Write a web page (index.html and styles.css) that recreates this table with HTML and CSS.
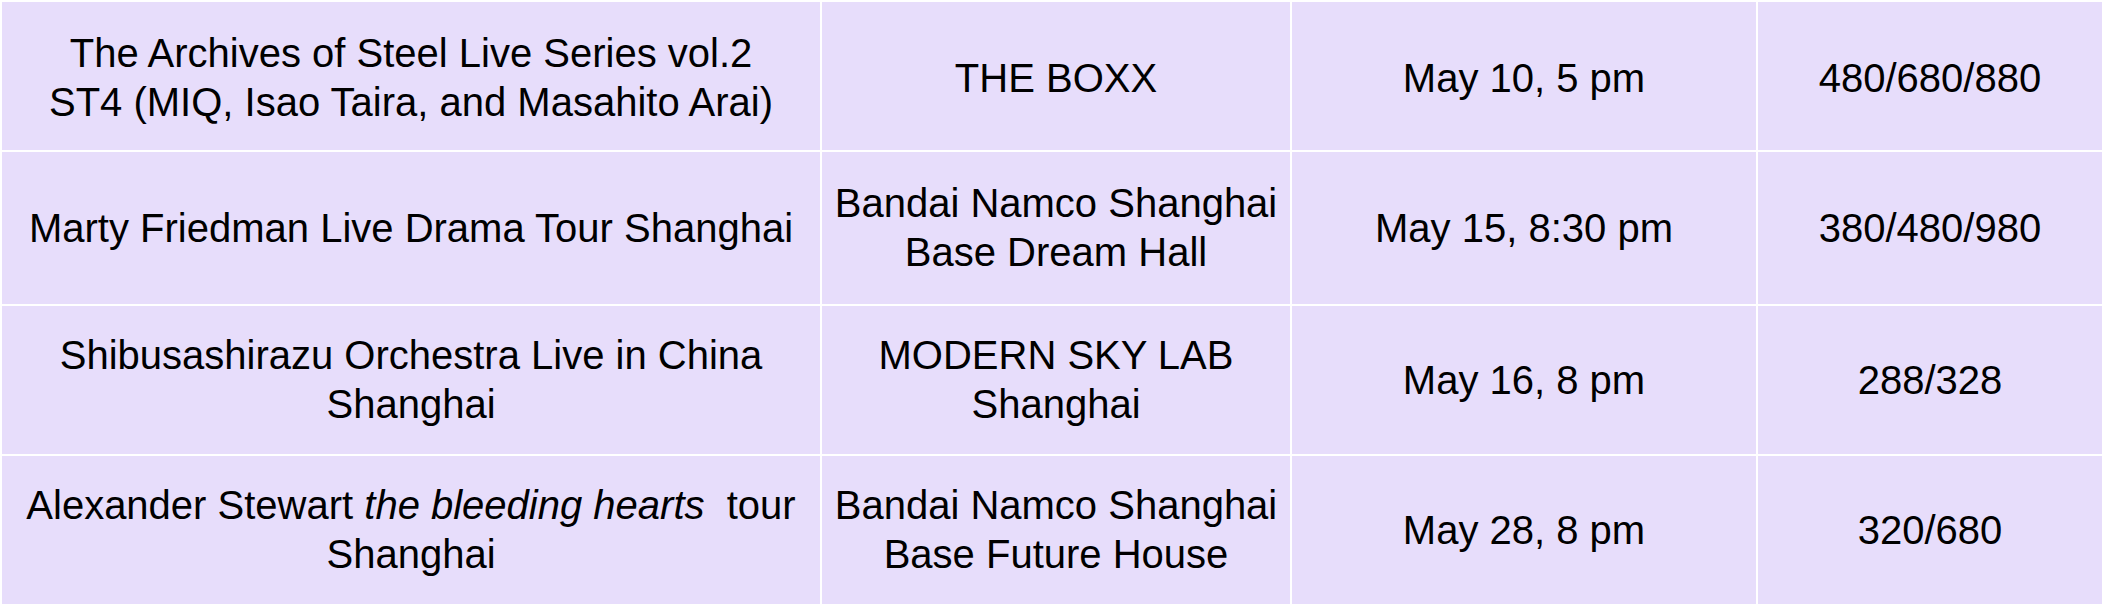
FILE: index.html
```html
<!DOCTYPE html>
<html lang="en">
<head>
<meta charset="utf-8">
<title>Concert schedule</title>
<link rel="stylesheet" href="styles.css">
</head>
<body>
<table class="schedule">
  <colgroup>
    <col class="col-title">
    <col class="col-venue">
    <col class="col-date">
    <col class="col-price">
  </colgroup>
  <tbody>
    <tr class="row-first">
      <td>The Archives of Steel Live Series vol.2<br>ST4 (MIQ, Isao Taira, and Masahito Arai)</td>
      <td>THE BOXX</td>
      <td>May 10, 5 pm</td>
      <td>480/680/880</td>
    </tr>
    <tr class="row-b">
      <td>Marty Friedman Live Drama Tour Shanghai</td>
      <td>Bandai Namco Shanghai<br>Base Dream Hall</td>
      <td>May 15, 8:30 pm</td>
      <td>380/480/980</td>
    </tr>
    <tr class="row-a">
      <td>Shibusashirazu Orchestra Live in China<br>Shanghai</td>
      <td>MODERN SKY LAB<br>Shanghai</td>
      <td>May 16, 8 pm</td>
      <td>288/328</td>
    </tr>
    <tr class="row-a">
      <td>Alexander Stewart <em>the bleeding hearts</em>&nbsp; tour<br>Shanghai</td>
      <td>Bandai Namco Shanghai<br>Base Future House</td>
      <td>May 28, 8 pm</td>
      <td>320/680</td>
    </tr>
  </tbody>
</table>
</body>
</html>
```
FILE: styles.css
```css
html, body {
  margin: 0;
  padding: 0;
  background: #ffffff;
}

.schedule {
  width: 2104px;
  table-layout: fixed;
  border-collapse: separate;
  border-spacing: 2px;
  font-family: "Liberation Sans", Arial, sans-serif;
  font-size: 40px;
  line-height: 49px;
  color: #000000;
}

.col-title { width: 818px; }
.col-venue { width: 468px; }
.col-date  { width: 464px; }
.col-price { width: 344px; }

.schedule td {
  background: #e7ddfb;
  padding: 0;
  text-align: center;
  vertical-align: middle;
}

.row-first td {
  height: 144px;
  padding-top: 4px;
}
.row-a td { height: 148px; }
.row-b td { height: 152px; }

.schedule em {
  font-style: italic;
}
```
